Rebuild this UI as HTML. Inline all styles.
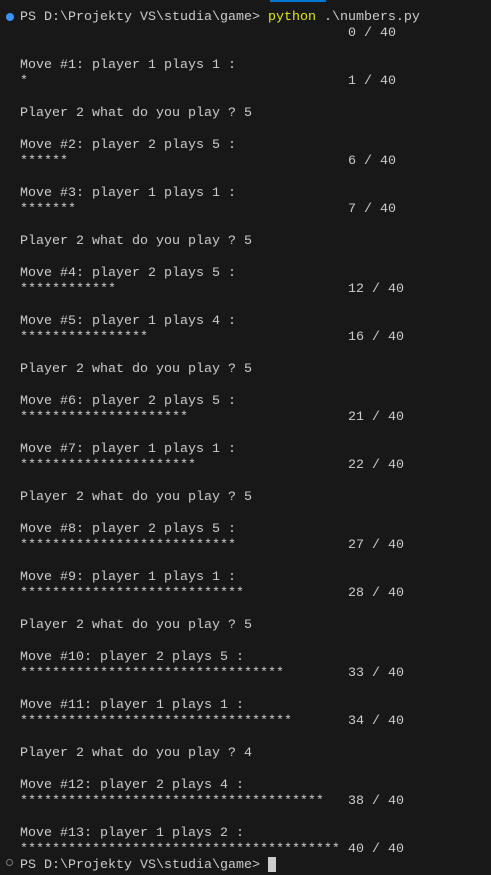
<!DOCTYPE html>
<html><head><meta charset="utf-8"><style>
html,body{margin:0;padding:0;background:#181818;width:491px;height:875px;overflow:hidden}
body{position:relative;font-family:"Liberation Mono",monospace;font-size:13.33px;color:#cccccc}
#w{position:absolute;left:0;top:2px;width:491px;height:873px}
.l{position:absolute;left:20px;height:16px;line-height:16px;white-space:pre}
.r{position:absolute;left:348px;height:16px;line-height:16px;white-space:pre}
.y{color:#e5e510}
.bar{position:absolute;left:270px;top:0;width:56px;height:2px;background:#0078d4}
.dot{position:absolute;left:6px;width:8px;height:8px;border-radius:50%}
.cur{position:absolute;left:268px;top:855px;width:8px;height:15px;background:#cccccc}
</style></head><body>
<div class="bar"></div>
<div id="w">
<div class="dot" style="top:11px;background:#3794ff"></div>
<div class="l" style="top:8px">PS D:\Projekty VS\studia\game&gt; <span class="y">python</span> .\numbers.py</div>
<div class="r" style="top:24px">0 / 40</div>

<div class="l" style="top:56px">Move #1: player 1 plays 1 :</div>
<div class="l" style="top:72px">*</div><div class="r" style="top:72px">1 / 40</div>
<div class="l" style="top:104px">Player 2 what do you play ? 5</div>

<div class="l" style="top:136px">Move #2: player 2 plays 5 :</div>
<div class="l" style="top:152px">******</div><div class="r" style="top:152px">6 / 40</div>
<div class="l" style="top:184px">Move #3: player 1 plays 1 :</div>
<div class="l" style="top:200px">*******</div><div class="r" style="top:200px">7 / 40</div>
<div class="l" style="top:232px">Player 2 what do you play ? 5</div>

<div class="l" style="top:264px">Move #4: player 2 plays 5 :</div>
<div class="l" style="top:280px">************</div><div class="r" style="top:280px">12 / 40</div>
<div class="l" style="top:312px">Move #5: player 1 plays 4 :</div>
<div class="l" style="top:328px">****************</div><div class="r" style="top:328px">16 / 40</div>
<div class="l" style="top:360px">Player 2 what do you play ? 5</div>

<div class="l" style="top:392px">Move #6: player 2 plays 5 :</div>
<div class="l" style="top:408px">*********************</div><div class="r" style="top:408px">21 / 40</div>
<div class="l" style="top:440px">Move #7: player 1 plays 1 :</div>
<div class="l" style="top:456px">**********************</div><div class="r" style="top:456px">22 / 40</div>
<div class="l" style="top:488px">Player 2 what do you play ? 5</div>

<div class="l" style="top:520px">Move #8: player 2 plays 5 :</div>
<div class="l" style="top:536px">***************************</div><div class="r" style="top:536px">27 / 40</div>
<div class="l" style="top:568px">Move #9: player 1 plays 1 :</div>
<div class="l" style="top:584px">****************************</div><div class="r" style="top:584px">28 / 40</div>
<div class="l" style="top:616px">Player 2 what do you play ? 5</div>

<div class="l" style="top:648px">Move #10: player 2 plays 5 :</div>
<div class="l" style="top:664px">*********************************</div><div class="r" style="top:664px">33 / 40</div>
<div class="l" style="top:696px">Move #11: player 1 plays 1 :</div>
<div class="l" style="top:712px">**********************************</div><div class="r" style="top:712px">34 / 40</div>
<div class="l" style="top:744px">Player 2 what do you play ? 4</div>

<div class="l" style="top:776px">Move #12: player 2 plays 4 :</div>
<div class="l" style="top:792px">**************************************</div><div class="r" style="top:792px">38 / 40</div>
<div class="l" style="top:824px">Move #13: player 1 plays 2 :</div>
<div class="l" style="top:840px">****************************************</div><div class="r" style="top:840px">40 / 40</div>

<div class="dot" style="top:857px;border:1.5px solid #7a7a7a;width:5px;height:5px"></div>
<div class="l" style="top:856px">PS D:\Projekty VS\studia\game&gt;</div>
<div class="cur"></div>
</div>
</body></html>
